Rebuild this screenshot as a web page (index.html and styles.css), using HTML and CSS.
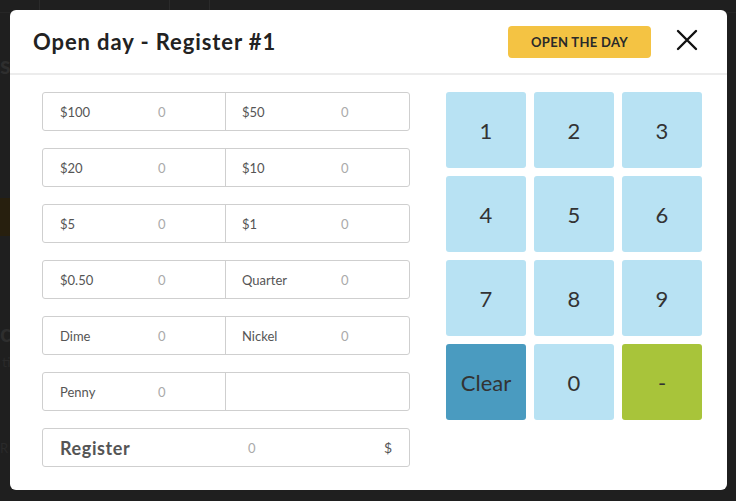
FILE: index.html
```html
<!DOCTYPE html>
<html>
<head>
<meta charset="utf-8">
<link rel="stylesheet" href="styles.css">
</head>
<body>
<div class="page">
  <div class="page-top">
    <span class="tab"></span><span class="tab wide"></span><span class="tab"></span>
  </div>
  <div class="page-s">s</div>
  <div class="page-bar"></div>
  <div class="page-ch">ch</div>
  <div class="page-sub">ti</div>
  <div class="page-r">R</div>
</div>
<div class="modal">
  <div class="modal-header">
    <h1 class="title">Open day - Register #1</h1>
    <button class="open-btn">OPEN THE DAY</button>
    <button class="close-btn" aria-label="Close">
      <svg width="22" height="22" viewBox="0 0 22 22"><path d="M2 2 L20 20 M20 2 L2 20" stroke="#111" stroke-width="2.4" stroke-linecap="round" fill="none"/></svg>
    </button>
  </div>
  <div class="modal-body">
    <div class="fields">
      <div class="row">
        <div class="cell"><span class="label">$100</span><span class="val">0</span></div>
        <div class="cell"><span class="label">$50</span><span class="val">0</span></div>
      </div>
      <div class="row">
        <div class="cell"><span class="label">$20</span><span class="val">0</span></div>
        <div class="cell"><span class="label">$10</span><span class="val">0</span></div>
      </div>
      <div class="row">
        <div class="cell"><span class="label">$5</span><span class="val">0</span></div>
        <div class="cell"><span class="label">$1</span><span class="val">0</span></div>
      </div>
      <div class="row">
        <div class="cell"><span class="label">$0.50</span><span class="val">0</span></div>
        <div class="cell"><span class="label">Quarter</span><span class="val">0</span></div>
      </div>
      <div class="row">
        <div class="cell"><span class="label">Dime</span><span class="val">0</span></div>
        <div class="cell"><span class="label">Nickel</span><span class="val">0</span></div>
      </div>
      <div class="row">
        <div class="cell"><span class="label">Penny</span><span class="val">0</span></div>
        <div class="cell"></div>
      </div>
      <div class="row total">
        <span class="total-label">Register</span>
        <span class="total-val">0</span>
        <span class="total-cur">$</span>
      </div>
    </div>
    <div class="keypad">
      <button class="key">1</button>
      <button class="key">2</button>
      <button class="key">3</button>
      <button class="key">4</button>
      <button class="key">5</button>
      <button class="key">6</button>
      <button class="key">7</button>
      <button class="key">8</button>
      <button class="key">9</button>
      <button class="key clear">Clear</button>
      <button class="key">0</button>
      <button class="key minus">-</button>
    </div>
  </div>
</div>
</body>
</html>
```
FILE: styles.css
```css
* { box-sizing: border-box; }
html, body { margin: 0; padding: 0; }
body {
  width: 736px;
  height: 501px;
  background: #1f1f1f;
  font-family: Lato, "Open Sans", sans-serif;
  position: relative;
  overflow: hidden;
}
.page { position: relative; width: 736px; height: 501px; }
.page-top {
  height: 13px;
  border-bottom: 1px solid #262626;
  display: flex;
}
.tab { width: 40px; border-right: 1px solid #2a2a2a; }
.tab.wide { width: 130px; }
.page-s {
  position: absolute; left: 0; top: 50px;
  font-size: 24px; font-weight: 700; color: #2e2e2e;
}
.page-bar {
  position: absolute; left: 0; top: 198px; width: 20px; height: 38px;
  background: #271f0e;
}
.page-ch {
  position: absolute; left: 0; top: 318px;
  font-size: 24px; font-weight: 700; color: #2e2e2e;
}
.page-sub {
  position: absolute; left: 2px; top: 353px;
  font-size: 14px; color: #2a2a2a;
}
.page-r {
  position: absolute; left: 0; top: 440px;
  font-size: 13px; color: #2a2a2a;
}
.modal {
  position: absolute;
  left: 10px; top: 10px;
  width: 717px; height: 480px;
  background: #fff;
  border-radius: 6px;
  display: flex;
  flex-direction: column;
}
.modal-header {
  height: 65px;
  border-bottom: 2px solid #ececec;
  display: flex;
  align-items: center;
  padding: 0 29px 0 23px;
}
.title {
  margin: 0;
  flex: 1;
  font-size: 22px;
  font-weight: 700;
  color: #222;
  letter-spacing: 0.9px;
}
.open-btn {
  width: 143px; height: 32px;
  background: #f4c343;
  border: none;
  border-radius: 4px;
  font-family: inherit;
  font-size: 13px;
  font-weight: 700;
  color: #2a2a2a;
  letter-spacing: 0.3px;
  margin-right: 25px;
}
.close-btn {
  background: none; border: none; padding: 0;
  width: 22px; height: 22px;
  display: flex;
  margin-top: -3px;
}
.modal-body {
  display: flex;
  gap: 36px;
  padding: 17px 25px 0 32px;
}
.fields {
  width: 368px;
  display: flex;
  flex-direction: column;
  gap: 17px;
}
.row {
  height: 39px;
  border: 1px solid #cfcfcf;
  border-radius: 3px;
  display: flex;
}
.cell {
  flex: 1 1 0;
  display: flex;
  align-items: center;
  padding-left: 17px;
  font-size: 13px;
}
.cell:first-child { flex: 0 0 182px; }
.cell + .cell { border-left: 1px solid #cfcfcf; padding-left: 16px; }
.label { width: 98px; color: #555; }
.cell + .cell .label { width: 99px; }
.val { color: #aaa; }
.total { align-items: center; padding: 0 17px; }
.total-label { width: 188px; font-size: 18px; font-weight: 700; color: #555; letter-spacing: 0.6px; }
.total-val { flex: 1; font-size: 13px; color: #aaa; }
.total-cur { font-size: 14px; color: #555; }
.keypad {
  display: grid;
  grid-template-columns: repeat(3, 80px);
  grid-auto-rows: 76px;
  gap: 8px;
}
.key {
  border: none;
  border-radius: 3px;
  background: #b8e2f3;
  font-family: inherit;
  font-size: 22px;
  color: #333;
  padding: 0;
}
.key.clear { background: #4a9bc0; }
.key.minus { background: #a8c43a; }
```
